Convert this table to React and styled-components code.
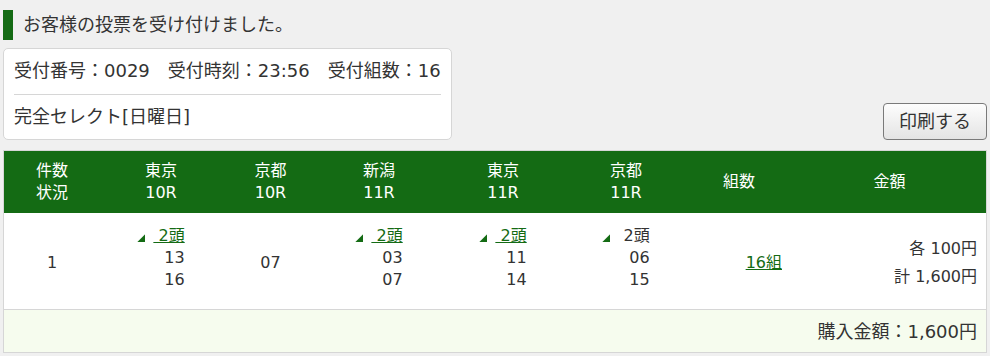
import React from 'react';
import styled, { createGlobalStyle } from 'styled-components';

const GlobalStyle = createGlobalStyle`
  body {
    margin: 0;
    background: #f0f0f0;
    color: #333;
    font-family: "DejaVu Sans", "Noto Sans CJK JP", sans-serif;
  }
`;

const GREEN = '#146b14';
const COLS = '96px 122px 97px 120px 128px 118px 108px 1fr';

const Page = styled.div`
  padding: 10px 3px 0 3px;
`;

const Notice = styled.h2`
  display: flex;
  align-items: center;
  gap: 10px;
  height: 30px;
  margin: 0;
  font-size: 18px;
  font-weight: normal;
  line-height: 30px;

  &::before {
    content: '';
    width: 10px;
    height: 30px;
    background: ${GREEN};
  }
`;

const TopRow = styled.div`
  display: flex;
  justify-content: space-between;
  align-items: flex-end;
  margin-top: 8px;
`;

const ReceiptCard = styled.div`
  background: #fff;
  border: 1px solid #d6d6d6;
  border-radius: 5px;
  padding: 0 10px;
  font-size: 18px;
  line-height: 27px;
`;

const ReceiptLine = styled.div`
  padding: ${p => (p.$first ? '8px 0 10px' : '8px 0 9px')};
  border-bottom: ${p => (p.$first ? '1px solid #d6d6d6' : 'none')};
  white-space: nowrap;
`;

const PrintButton = styled.button`
  font-family: inherit;
  font-size: 18px;
  line-height: 27px;
  color: #333;
  padding: 4px 15px;
  border: 1px solid #7a7a7a;
  border-radius: 4px;
  background: linear-gradient(#fdfdfd, #e4e4e4);
  cursor: pointer;
`;

const Table = styled.div`
  margin-top: 10px;
  border: 1px solid #d6d6d6;
  font-size: 16px;
  line-height: 22px;
`;

const HeadRow = styled.div`
  display: grid;
  grid-template-columns: ${COLS};
  background: ${GREEN};
  color: #fff;
`;

const HeadCell = styled.div`
  display: flex;
  flex-direction: column;
  justify-content: center;
  padding: 9px 0;
  text-align: center;
`;

const BodyRow = styled.div`
  box-sizing: border-box;
  display: grid;
  grid-template-columns: ${COLS};
  height: 97px;
  padding-top: 4px;
  background: #fff;
  border-bottom: 1px solid #d6d6d6;
`;

const Cell = styled.div`
  align-self: ${p => (p.$top ? 'start' : 'center')};
  padding-top: ${p => (p.$top ? 8 : 0)}px;
  padding-right: ${p => p.$inset || 0}px;
  text-align: ${p => p.$align || 'center'};
  line-height: ${p => p.$lh || 22}px;
`;

const Picks = styled.div`
  display: inline-block;
  text-align: right;
`;

const Marker = styled.span`
  display: inline-block;
  width: 8px;
  height: 8px;
  margin-right: 8px;
  vertical-align: -1px;
  background: ${GREEN};
  clip-path: polygon(100% 0, 100% 100%, 0 100%);
`;

const GreenLink = styled.a`
  color: ${GREEN};
  text-decoration: underline;
  cursor: pointer;
`;

const FooterRow = styled.div`
  height: 42px;
  padding-right: 9px;
  background: #f6fcee;
  text-align: right;
  font-size: 18px;
  line-height: 43px;
`;

const races = [
  { place: '東京', race: '10R', heads: '2頭', link: true, horses: ['13', '16'] },
  { place: '京都', race: '10R', horses: ['07'] },
  { place: '新潟', race: '11R', heads: '2頭', link: true, horses: ['03', '07'] },
  { place: '東京', race: '11R', heads: '2頭', link: true, horses: ['11', '14'] },
  { place: '京都', race: '11R', heads: '2頭', link: false, horses: ['06', '15'] },
];

function RaceCell({ race }) {
  if (!race.heads) {
    return <Cell>{race.horses[0]}</Cell>;
  }
  const label = '\u00a0' + race.heads;
  return (
    <Cell $top>
      <Picks>
        <div>
          <Marker />
          {race.link ? <GreenLink>{label}</GreenLink> : <span>{label}</span>}
        </div>
        {race.horses.map(h => (
          <div key={h}>{h}</div>
        ))}
      </Picks>
    </Cell>
  );
}

export default function App() {
  return (
    <Page>
      <GlobalStyle />
      <Notice>お客様の投票を受け付けました。</Notice>

      <TopRow>
        <ReceiptCard>
          <ReceiptLine $first>受付番号：0029　受付時刻：23:56　受付組数：16</ReceiptLine>
          <ReceiptLine>完全セレクト[日曜日]</ReceiptLine>
        </ReceiptCard>
        <PrintButton>印刷する</PrintButton>
      </TopRow>

      <Table>
        <HeadRow>
          <HeadCell>
            <div>件数</div>
            <div>状況</div>
          </HeadCell>
          {races.map((r, i) => (
            <HeadCell key={i}>
              <div>{r.place}</div>
              <div>{r.race}</div>
            </HeadCell>
          ))}
          <HeadCell>組数</HeadCell>
          <HeadCell>金額</HeadCell>
        </HeadRow>

        <BodyRow>
          <Cell>1</Cell>
          {races.map((r, i) => (
            <RaceCell key={i} race={r} />
          ))}
          <Cell $align="right" $inset={11}>
            <GreenLink>16組</GreenLink>
          </Cell>
          <Cell $align="right" $inset={9} $lh={28}>
            <div>各 100円</div>
            <div>計 1,600円</div>
          </Cell>
        </BodyRow>

        <FooterRow>購入金額：1,600円</FooterRow>
      </Table>
    </Page>
  );
}
